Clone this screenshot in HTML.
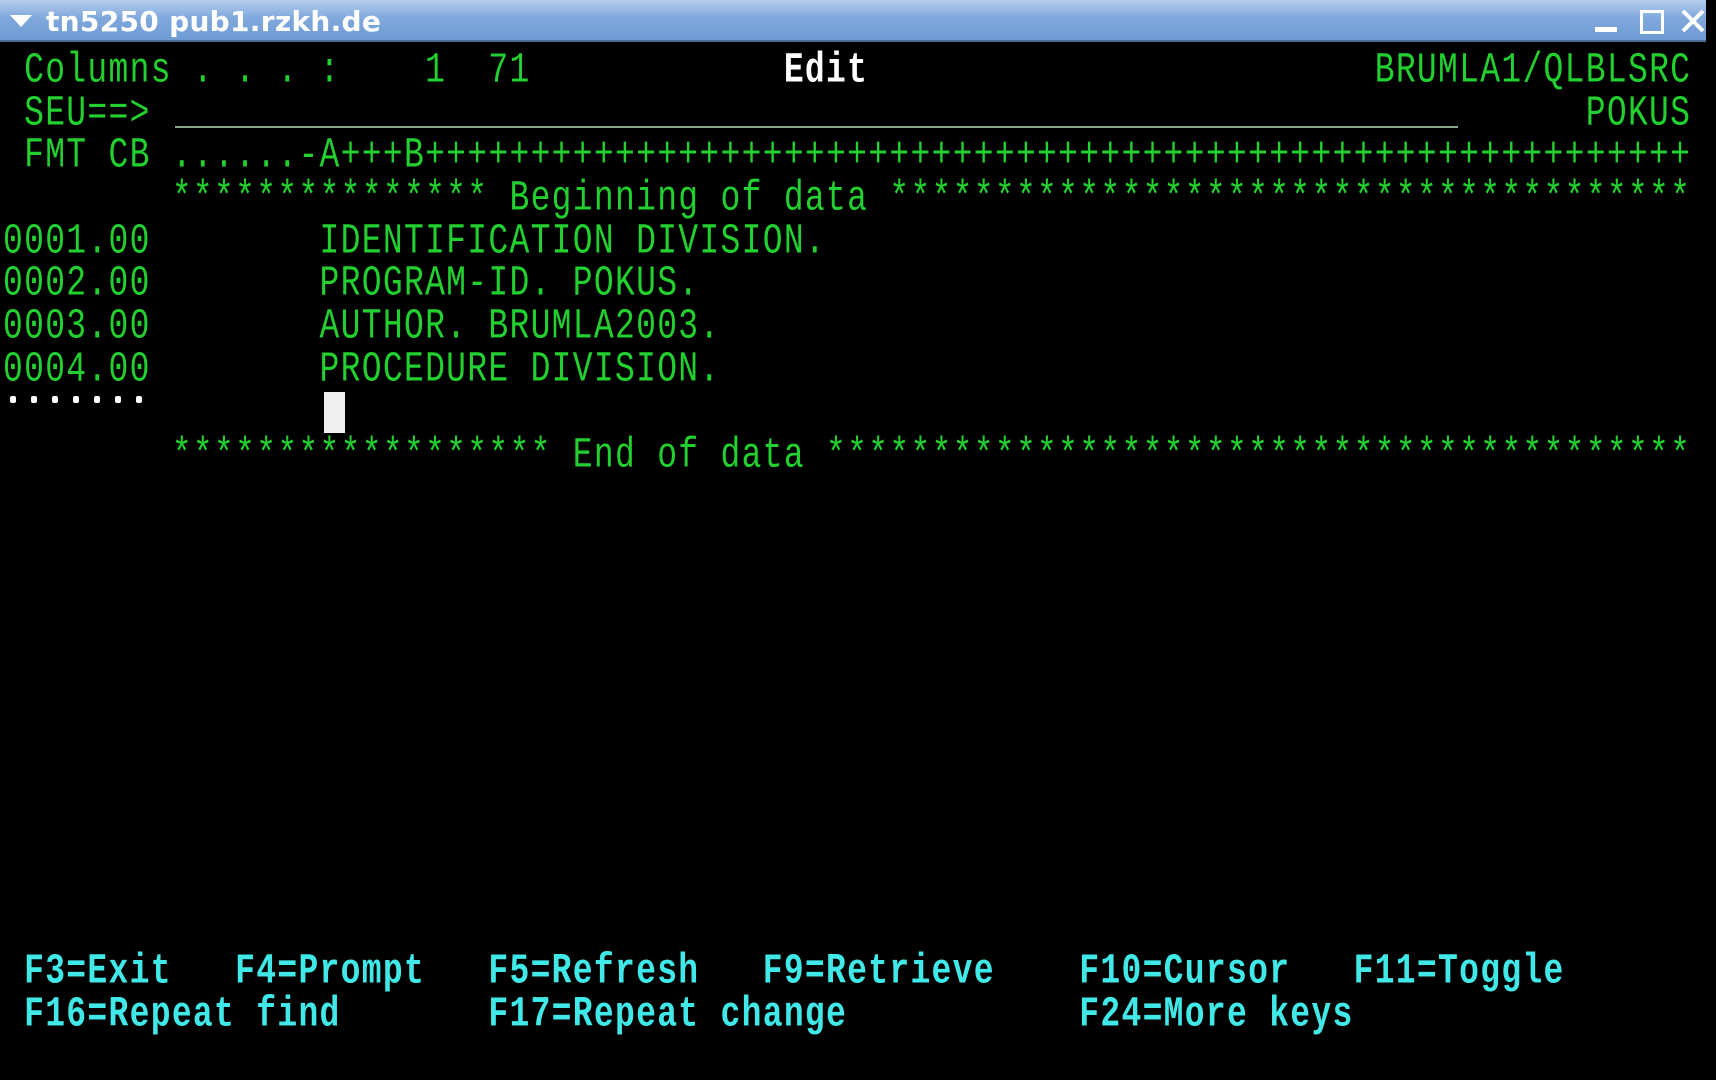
<!DOCTYPE html>
<html><head><meta charset="utf-8"><style>
html,body{margin:0;padding:0;background:#000;width:1716px;height:1080px;overflow:hidden}
#tb{position:absolute;left:0;top:0;width:1706px;height:40px;background:linear-gradient(#b4cdee,#80a8dc 45%,#6e9bd4);border-bottom:2px solid #4a6a98}
#tb .t{position:absolute;left:46px;top:5px;font:bold 28px "DejaVu Sans","Liberation Sans",sans-serif;color:#fff;letter-spacing:0.3px}
#tb .tri{position:absolute;left:10px;top:15px;width:0;height:0;border-left:11px solid transparent;border-right:11px solid transparent;border-top:12px solid #fff}
.row{position:absolute;left:3px;height:43px;line-height:43px;white-space:pre;font-family:"Liberation Mono",monospace;font-size:33px;letter-spacing:1.3px;transform:scaleY(1.3);transform-origin:left center}
.g{color:#22d030}.c{color:#40e8e8;font-weight:bold}.w{color:#fff;font-weight:bold}
.d{position:absolute;top:0;width:6px;height:7px;background:#fff;border-radius:2px}
</style></head><body>
<div id="tb"><div class="tri"></div><div class="t">tn5250 pub1.rzkh.de</div>
<div style="position:absolute;left:1595px;top:27px;width:22px;height:5px;background:#fff"></div>
<div style="position:absolute;left:1640px;top:10px;border:3px solid #fff;box-sizing:border-box;width:24px;height:24px"></div>
<svg style="position:absolute;left:1680px;top:8px" width="26" height="26"><path d="M3 3L23 23M23 3L3 23" stroke="#fff" stroke-width="4"/></svg>
</div>
<div class="row g" style="top:49px"> Columns . . . :    1  71            <span class="w">Edit</span>                        BRUMLA1/QLBLSRC</div>
<div class="row g" style="top:92px"> SEU==>                                                                    POKUS</div>
<div style="position:absolute;left:175px;top:126px;width:1283px;height:2px;background:#8aa88a"></div>
<div class="row g" style="top:134px"> FMT CB ......-A+++B++++++++++++++++++++++++++++++++++++++++++++++++++++++++++++</div>
<div class="row g" style="top:177px">        *************** Beginning of data **************************************</div>
<div class="row g" style="top:220px">0001.00        IDENTIFICATION DIVISION.</div>
<div class="row g" style="top:262px">0002.00        PROGRAM-ID. POKUS.</div>
<div class="row g" style="top:305px">0003.00        AUTHOR. BRUMLA2003.</div>
<div class="row g" style="top:348px">0004.00        PROCEDURE DIVISION.</div>
<div style="position:absolute;left:0;top:396px;width:160px;height:10px">
<span class="d" style="left:10px"></span><span class="d" style="left:31px"></span><span class="d" style="left:52px"></span><span class="d" style="left:73px"></span><span class="d" style="left:94px"></span><span class="d" style="left:115px"></span><span class="d" style="left:136px"></span>
</div>
<div style="position:absolute;left:324px;top:392px;width:21px;height:41px;background:#f0f0f0"></div>
<div class="row g" style="top:434px">        ****************** End of data *****************************************</div>
<div class="row c" style="top:950px"> F3=Exit   F4=Prompt   F5=Refresh   F9=Retrieve    F10=Cursor   F11=Toggle</div>
<div class="row c" style="top:993px"> F16=Repeat find       F17=Repeat change           F24=More keys</div>
</body></html>
